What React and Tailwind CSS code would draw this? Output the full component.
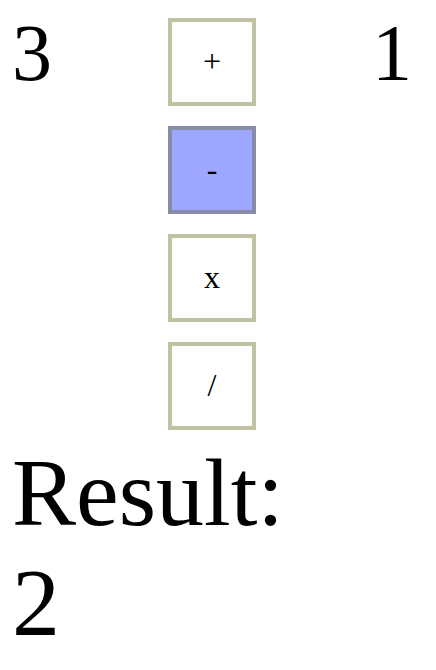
import { useState } from "react";

const operators = [
  { symbol: "+", label: "Add", apply: (a, b) => a + b },
  { symbol: "-", label: "Subtract", apply: (a, b) => a - b },
  { symbol: "x", label: "Multiply", apply: (a, b) => a * b },
  { symbol: "/", label: "Divide", apply: (a, b) => a / b },
];

function OperatorButton({ symbol, label, selected, onSelect }) {
  const tone = selected
    ? "border-[#888ca6] bg-[#9ea7ff]"
    : "border-[#c1c2a2] bg-white";
  return (
    <button
      type="button"
      aria-label={label}
      aria-pressed={selected}
      onClick={onSelect}
      className={`flex size-22 items-center justify-center border-4 pb-0.5 text-[32px] leading-9 ${tone}`}
    >
      {symbol}
    </button>
  );
}

export default function App() {
  const [selected, setSelected] = useState("-");
  const left = 3;
  const right = 1;
  const active = operators.find((op) => op.symbol === selected);

  return (
    <main className="bg-white px-3 pt-4.5 font-['Liberation_Serif',serif] text-black">
      <div className="flex justify-between pr-3">
        <div className="text-[80px] leading-[70px]">{left}</div>
        <div className="flex flex-col gap-5">
          {operators.map((op) => (
            <OperatorButton
              key={op.symbol}
              symbol={op.symbol}
              label={op.label}
              selected={op.symbol === selected}
              onSelect={() => setSelected(op.symbol)}
            />
          ))}
        </div>
        <div className="text-[80px] leading-[70px]">{right}</div>
      </div>
      <div className="mt-2 text-[96px] leading-[110px]">
        <div>Result:</div>
        <div>{active.apply(left, right)}</div>
      </div>
    </main>
  );
}
